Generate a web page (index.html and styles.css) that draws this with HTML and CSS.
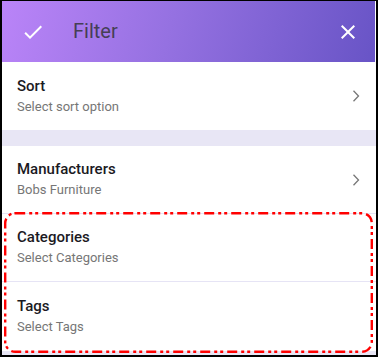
FILE: index.html
```html
<!DOCTYPE html>
<html lang="en">
<head>
    <meta charset="UTF-8">
    <meta name="viewport" content="width=device-width, initial-scale=1.0">
    <title>Filter</title>
    <link rel="stylesheet" href="styles.css">
</head>
<body>
    <div class="frame">
        <!-- Barra superior del filtro -->
        <div class="toolbar">
            <svg class="tool-icon" width="24" height="24" viewBox="0 0 24 24"><path fill="#fff" d="M9 16.17L4.83 12l-1.42 1.41L9 19 21 7l-1.41-1.41z"/></svg>
            <span class="toolbar-title">Filter</span>
            <svg class="tool-icon close" width="24" height="24" viewBox="0 0 24 24"><path fill="#fff" d="M19 6.41L17.59 5 12 10.59 6.41 5 5 6.41 10.59 12 5 17.59 6.41 19 12 13.41 17.59 19 19 17.59 13.41 12z"/></svg>
        </div>

        <div class="option">
            <div class="option-text">
                <span class="option-title">Sort</span>
                <span class="option-sub">Select sort option</span>
            </div>
            <svg class="chevron" width="8" height="12" viewBox="0 0 8 12"><polyline points="1.5,0.8 6.5,6 1.5,11.2" fill="none" stroke="#777" stroke-width="1.3"/></svg>
        </div>

        <div class="band"></div>

        <div class="option divided">
            <div class="option-text">
                <span class="option-title">Manufacturers</span>
                <span class="option-sub">Bobs Furniture</span>
            </div>
            <svg class="chevron" width="8" height="12" viewBox="0 0 8 12"><polyline points="1.5,0.8 6.5,6 1.5,11.2" fill="none" stroke="#777" stroke-width="1.3"/></svg>
        </div>

        <!-- Zona resaltada -->
        <div class="highlight">
            <div class="option divided">
                <div class="option-text">
                    <span class="option-title">Categories</span>
                    <span class="option-sub">Select Categories</span>
                </div>
            </div>
            <div class="option last">
                <div class="option-text">
                    <span class="option-title">Tags</span>
                    <span class="option-sub">Select Tags</span>
                </div>
            </div>
            <svg class="dash-box" width="370" height="142" viewBox="0 0 370 142">
                <rect x="1.2" y="1.2" width="366.6" height="138.6" rx="10" fill="none" stroke="#f00" stroke-width="2.4" stroke-dasharray="10 4 3 3 3 4"/>
            </svg>
        </div>
    </div>
</body>
</html>
```

FILE: styles.css
```css
* {
    margin: 0;
    padding: 0;
    box-sizing: border-box;
}

body {
    font-family: Roboto, 'Noto Sans', sans-serif;
    background-color: #fff;
}

.frame {
    width: 378px;
    height: 357px;
    border: 2px solid #000;
    border-top-width: 1px;
    background-color: #e8e6f5;
    display: flex;
    flex-direction: column;
    overflow: hidden;
}

.toolbar {
    height: 61px;
    flex-shrink: 0;
    display: flex;
    align-items: center;
    padding: 0 15px 0 19px;
    background: linear-gradient(105deg, #ba84f8 0%, #9571e1 45%, #6854c6 100%);
    border-right: 1px solid #fff;
}

.tool-icon {
    flex-shrink: 0;
}

.toolbar-title {
    flex: 1;
    margin-left: 28px;
    font-size: 20px;
    color: #463f55;
    padding-bottom: 1px;
}

.option {
    height: 68px;
    flex-shrink: 0;
    display: flex;
    align-items: center;
    padding: 0 16px 0 15px;
    background-color: #fff;
}

.option.divided {
    border-bottom: 1px solid #e6e4f5;
}

.option.last {
    height: 69px;
}

.option-text {
    flex: 1;
    display: flex;
    flex-direction: column;
}

.option-title {
    font-size: 15px;
    font-weight: 500;
    line-height: 20px;
    color: #1b1a1f;
}

.option-sub {
    font-size: 13px;
    line-height: 20px;
    margin-top: 1px;
    color: #767676;
}

.chevron {
    flex-shrink: 0;
}

.band {
    height: 16px;
    flex-shrink: 0;
    background-color: #e8e6f5;
}

.highlight {
    position: relative;
}

.dash-box {
    position: absolute;
    top: -2px;
    left: 2px;
}
```
